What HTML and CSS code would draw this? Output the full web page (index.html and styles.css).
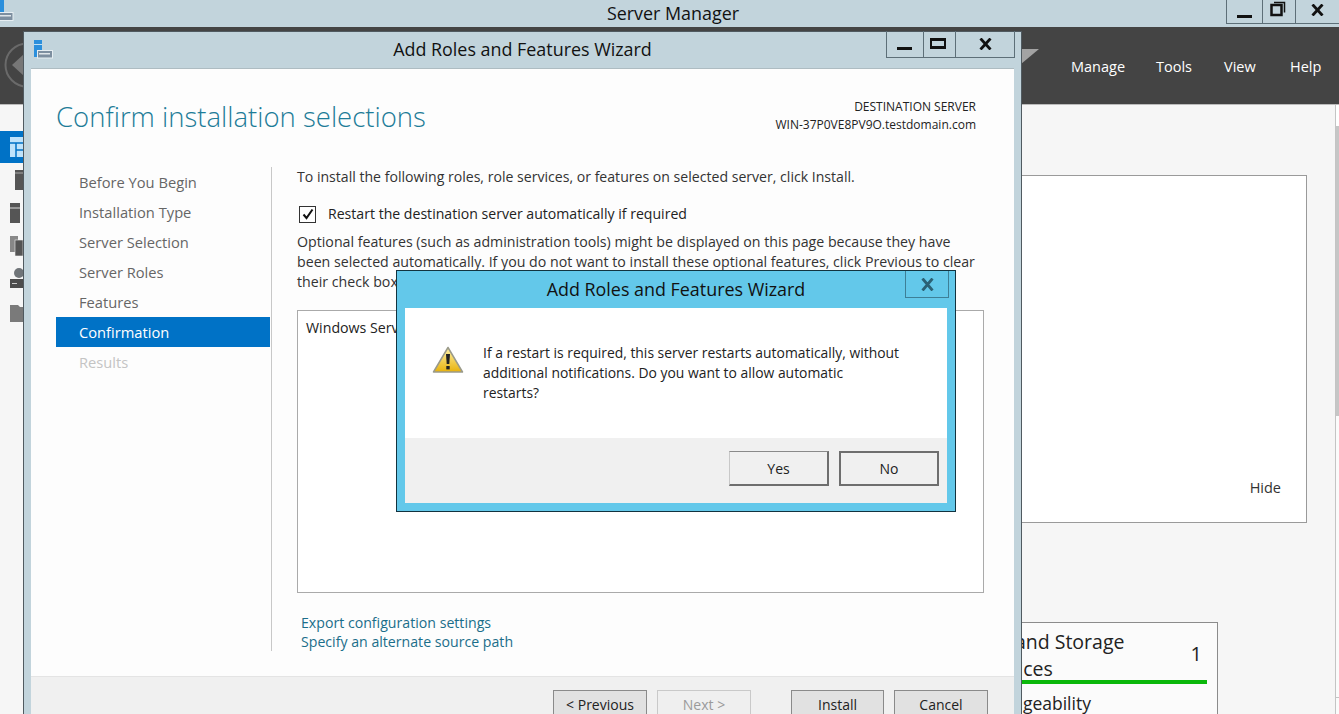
FILE: index.html
```html
<!DOCTYPE html>
<html lang="en">
<head>
<meta charset="utf-8">
<title>Server Manager</title>
<link rel="stylesheet" href="styles.css">
</head>
<body>
<div class="desktop">
  <div class="manager">
    <header class="mtitle">
      <svg class="mlogo" width="14" height="22" viewBox="0 0 14 22"><rect x="-6" y="0" width="10" height="17" fill="#2b8fdc"/><rect x="-2" y="12.500" width="15" height="8" fill="#7d8fa0" stroke="#e6eef2"/><rect x="-1" y="15" width="12" height="1.500" fill="#dfe6ea"/></svg>
      <span class="mname">Server Manager</span>
      <div class="ctrls mctrls">
        <button class="ctrl c1"><span class="ic-min"></span></button>
        <button class="ctrl c2">
          <svg class="ic-restore" width="16" height="16" viewBox="0 0 16 16"><path d="M4 1.500h10.500v10" fill="none" stroke="#111" stroke-width="1.500"/><rect x="1.500" y="4" width="10" height="10" fill="none" stroke="#111" stroke-width="2.500"/></svg>
        </button>
        <button class="ctrl c3"><svg class="ic-x up" width="13" height="12" viewBox="0 0 13 12"><path d="M1.500 .5 11.500 11.500M11.500 .5 1.500 11.500" stroke="#111" stroke-width="2.800"/></svg></button>
      </div>
    </header>
    <div class="mhead">
      <div class="backbtn"><svg width="46" height="46" viewBox="0 0 46 46"><circle cx="23" cy="23" r="21.500" fill="none" stroke="#6a6a6a" stroke-width="2"/><path d="M8 23 20 12v22z" fill="#777"/></svg></div>
      <svg class="flag" width="18" height="16" viewBox="0 0 18 16"><path d="M0 0H18L0 15z" fill="#a3a3a3"/></svg>
      <nav class="menu"><span>Manage</span><span>Tools</span><span>View</span><span>Help</span></nav>
    </div>
    <div class="mbody">
      <aside class="side">
        <div class="sitem active"><svg width="13" height="20" viewBox="0 0 13 20"><rect width="13" height="20" fill="#bfe3fb"/><path d="M0 6h13M6 6v14M6 13h7" stroke="#0072c6" stroke-width="1.500"/></svg></div>
        <div class="sitem i2"><svg width="8" height="20" viewBox="0 0 8 20"><rect width="8" height="20" fill="#555"/><path d="M0 3h8" stroke="#aaa"/></svg></div>
        <div class="sitem i3"><svg width="13" height="20" viewBox="0 0 13 20"><rect width="10" height="20" fill="#555"/><path d="M0 5h10" stroke="#ddd"/></svg></div>
        <div class="sitem i4"><svg width="13" height="20" viewBox="0 0 13 20"><rect width="8" height="16" fill="#888"/><rect x="5" y="4" width="8" height="16" fill="#555" stroke="#eee" stroke-width=".6"/></svg></div>
        <div class="sitem i5"><svg width="13" height="21" viewBox="0 0 13 21"><circle cx="9" cy="5" r="5" fill="#6f7478"/><rect y="11" width="13" height="9" fill="#4c4c4c"/><path d="M2 15.500h5" stroke="#ccc"/></svg></div>
        <div class="sitem i6"><svg width="13" height="20" viewBox="0 0 13 20"><path d="M0 3h8l2 2h3v15H0z" fill="#7a7a7a"/></svg></div>
      </aside>
      <main class="dash">
        <section class="welcome"><span class="hide">Hide</span></section>
        <section class="tile">
          <div class="tile-head">
            <h3>File and Storage<br>Services</h3>
            <span class="count">1</span>
          </div>
          <div class="bar"></div>
          <p class="tile-row">Manageability</p>
        </section>
      </main>
      <div class="scroll"><div class="thumbcap"></div><div class="thumb"></div><div class="tick"></div></div>
    </div>
  </div>

  <div class="wizard">
    <header class="wtitle">
      <svg class="wlogo" width="19" height="19" viewBox="0 0 19 19"><rect x="0" y="0" width="8" height="17" fill="#2b8fdc"/><path d="M0 4.500h8" stroke="#bfe0f5"/><rect x="3.500" y="10.500" width="15" height="7.500" fill="#7d8fa0" stroke="#e6eef2"/><rect x="5" y="13" width="11" height="1.500" fill="#dfe6ea"/></svg>
      <span class="wname">Add Roles and Features Wizard</span>
      <div class="ctrls wctrls">
        <button class="ctrl w1"><span class="ic-min"></span></button>
        <button class="ctrl w2"><span class="ic-max"></span></button>
        <button class="ctrl w3"><svg class="ic-x" width="13" height="12" viewBox="0 0 13 12"><path d="M1.500 .5 11.500 11.500M11.500 .5 1.500 11.500" stroke="#111" stroke-width="2.800"/></svg></button>
      </div>
    </header>
    <div class="wcontent">
      <div class="whead">
        <h1>Confirm installation selections</h1>
        <div class="dest"><div>DESTINATION SERVER</div><div>WIN-37P0VE8PV9O.testdomain.com</div></div>
      </div>
      <div class="wmain">
        <nav class="steps">
          <div class="step">Before You Begin</div>
          <div class="step">Installation Type</div>
          <div class="step">Server Selection</div>
          <div class="step">Server Roles</div>
          <div class="step">Features</div>
          <div class="step current">Confirmation</div>
          <div class="step off">Results</div>
        </nav>
        <div class="pane">
          <p class="intro">To install the following roles, role services, or features on selected server, click Install.</p>
          <label class="check">
            <span class="box"><svg width="12" height="12" viewBox="0 0 12 12"><path d="M1.500 6.500 4.500 10 10.500 1.500" fill="none" stroke="#111" stroke-width="2"/></svg></span>
            <span>Restart the destination server automatically if required</span>
          </label>
          <p class="optional">Optional features (such as administration tools) might be displayed on this page because they have<br>been selected automatically. If you do not want to install these optional features, click Previous to clear<br>their check boxes.</p>
          <div class="listbox">Windows Server Backup</div>
          <div class="links"><a>Export configuration settings</a><a>Specify an alternate source path</a></div>
        </div>
      </div>
      <footer class="wfoot">
        <button class="btn">&lt; Previous</button>
        <button class="btn dis">Next &gt;</button>
        <button class="btn install">Install</button>
        <button class="btn">Cancel</button>
      </footer>
    </div>
  </div>

  <div class="dialog">
    <header class="dtitle">
      <span class="dname">Add Roles and Features Wizard</span>
      <button class="dclose"><svg width="13" height="13" viewBox="0 0 13 13"><path d="M1.500 .5 11.500 12.500M11.500 .5 1.500 12.500" stroke="#2b6175" stroke-width="2.800"/></svg></button>
    </header>
    <div class="dcontent">
      <div class="dmsg">
        <svg class="warn" width="32" height="28" viewBox="0 0 32 28"><defs><linearGradient id="wg" x1="0" y1="0" x2="0" y2="1"><stop offset="0" stop-color="#fff2a8"/><stop offset="1" stop-color="#e8b20c"/></linearGradient></defs><path d="M16 1.500 30.500 26h-29z" fill="url(#wg)" stroke="#9a9a8a" stroke-width="1.500" stroke-linejoin="round"/><path d="M14 8h4l-.7 10h-2.600z" fill="#222"/><rect x="14.300" y="20" width="3.400" height="3.400" fill="#222"/></svg>
        <p>If a restart is required, this server restarts automatically, without<br>additional notifications. Do you want to allow automatic<br>restarts?</p>
      </div>
      <footer class="dfoot">
        <button class="btn dbtn">Yes</button>
        <button class="btn dbtn def">No</button>
      </footer>
    </div>
  </div>
</div>
</body>
</html>
```

FILE: styles.css
```css
* { box-sizing: border-box; }
html, body { margin: 0; height: 100%; overflow: hidden; }
body { font-family: "Open Sans", "Noto Sans", sans-serif; color: #222; background: #f6f6f6; }
h1, h3, p { margin: 0; font-weight: 400; }
button { font-family: inherit; padding: 0; margin: 0; }

.desktop { position: relative; width: 1339px; height: 714px; overflow: hidden; }

/* main window */
.manager { display: flex; flex-direction: column; height: 714px; }
.mtitle { position: relative; height: 27px; flex: none; background: #c2d4dc; display: flex; justify-content: center; align-items: center; }
.mlogo { position: absolute; left: 0; top: 0; }
.mname { font-size: 17.900px; color: #111; margin-left: 7px; margin-bottom: 2px; }
.ctrls { position: absolute; top: 0; right: 0; display: flex; border: 1px solid #5d6f78; border-top: 0; }
.mctrls { height: 24px; width: 113px; border-right: 0; }
.ctrl { background: transparent; border: 0; border-left: 1px solid #5d6f78; display: flex; align-items: center; justify-content: center; height: 100%; }
.ctrl:first-child { border-left: 0; }
.c1 { width: 35px; } .c2 { width: 34px; } .c3 { width: 44px; }
.ic-min { display: block; width: 15px; height: 3px; background: #111; margin-top: 9px; }
.ic-max { display: block; width: 16px; height: 11px; border: 3px solid #111; border-left-width: 2px; border-right-width: 2px; margin-right: 3px; margin-bottom: 1px; }
.ic-restore { margin: -5px 3px 0 0; }
.ic-x { display: block; }
.ic-x.up { margin-top: -4px; }

.mhead { position: relative; height: 78px; flex: none; background: #444; border-bottom: 1px solid #bbb; }
.backbtn { position: absolute; left: 4px; top: 15px; width: 46px; height: 46px; }
.flag { position: absolute; left: 1021px; top: 22px; }
.menu { position: absolute; left: 1071px; top: 30px; display: flex; font-size: 14.500px; color: #fff; line-height: 20px; }
.menu span:nth-child(1) { width: 85px; }
.menu span:nth-child(2) { width: 68px; }
.menu span:nth-child(3) { width: 66px; }

.mbody { flex: 1; display: flex; min-height: 0; }
.side { width: 44px; flex: none; display: flex; flex-direction: column; padding-top: 26px; }
.sitem { height: 33px; flex: none; display: flex; align-items: center; padding-left: 10px; }
.sitem.active { height: 32px; background: #0072c6; }
.sitem.i2 { padding-left: 15px; }
.dash { flex: 1; position: relative; }
.welcome { position: absolute; left: 600px; top: 70px; width: 663px; height: 348px; background: #fff; border: 1px solid #9a9a9a; }
.hide { position: absolute; right: 25px; bottom: 24px; font-size: 14.500px; color: #333; line-height: 20px; }
.tile { position: absolute; left: 800px; top: 517px; width: 374px; height: 120px; background: #fbfbfb; border: 1px solid #8c8c8c; padding: 6px 10px 0 20px; }
.tile-head { display: flex; justify-content: space-between; align-items: center; height: 51px; }
.tile-head h3 { font-size: 19.500px; line-height: 27px; padding-left: 114px; white-space: nowrap; }
.count { font-size: 20px; padding: 0 5px 2px 0; }
.bar { height: 4px; background: #0bb80b; margin-bottom: 7px; }
.tile-row { font-size: 17.500px; line-height: 24px; padding-left: 112px; }
.scroll { width: 4px; flex: none; border-left: 1px solid #c4c4c4; background: #fbfbfb; display: flex; flex-direction: column; }
.thumbcap { height: 21px; background: #fff; flex: none; }
.thumb { height: 290px; background: #c6c6c6; flex: none; }
.tick { height: 1px; background: #c4c4c4; margin-top: 281px; flex: none; }

/* wizard */
.wizard { position: absolute; left: 23px; top: 31px; width: 999px; height: 690px; background: #c2d4dc; border: 1px solid #505a60; border-bottom: 0; display: flex; flex-direction: column; padding: 0 7px 0 7px; }
.wtitle { height: 36px; flex: none; display: flex; justify-content: center; align-items: center; margin: 0 -7px; position: relative; }
.wlogo { position: absolute; left: 10px; top: 8px; }
.wname { font-size: 17.900px; color: #111; margin-bottom: 2px; }
.wctrls { height: 27px; width: 129px; right: 6px; top: -1px; border-top: 0; }
.w1 { width: 36px; } .w2 { width: 33px; } .w3 { width: 59px; }
.wcontent { flex: 1; min-height: 0; background: #fdfdfd; border-top: 1px solid #aebcc2; display: flex; flex-direction: column; }
.whead { height: 98px; flex: none; display: flex; justify-content: space-between; padding: 29px 38px 0 25px; }
.whead h1 { font-size: 27.500px; font-weight: 300; color: #1d7c98; line-height: 38px; }
.dest { font-size: 12px; color: #222; text-align: right; line-height: 18px; }
.wmain { flex: none; height: 509px; display: flex; }
.steps { width: 216px; flex: none; height: 484px; margin-left: 25px; border-right: 1px solid #c8c8c8; display: flex; flex-direction: column; }
.step { height: 30px; line-height: 31px; width: 214px; padding-left: 23px; font-size: 14.700px; color: #666; flex: none; }
.step.current { background: #0072c6; color: #fff; }
.step.off { color: #c4c4c4; }
.pane { flex: 1; padding-left: 25px; padding-right: 30px; }
.intro { font-size: 14.100px; line-height: 20px; color: #333; }
.check { display: flex; align-items: center; gap: 12px; margin: 17px 0 0 2px; font-size: 14.100px; line-height: 20px; color: #222; }
.box { width: 17px; height: 17px; border: 1px solid #333; background: #fff; display: flex; align-items: center; justify-content: center; flex: none; }
.optional { font-size: 14.200px; line-height: 20px; margin-top: 8px; color: #333; white-space: nowrap; }
.listbox { margin-top: 18px; width: 687px; height: 283px; border: 1px solid #aaa; background: #fff; padding: 7px 8px; font-size: 14.200px; line-height: 20px; color: #222; }
.links { margin: 20px 0 0 4px; display: flex; flex-direction: column; font-size: 14.150px; line-height: 19px; color: #1b6e8a; }
.wfoot { flex: 1; background: #f0f0f0; border-top: 1px solid #e4e4e4; display: flex; padding: 13px 0 0 522px; align-items: flex-start; }
.btn { width: 94px; height: 29px; background: #e1e1e1; border: 1px solid #8a8a8a; font-size: 14px; color: #222; margin-right: 10px; }
.btn.dis { background: #efefef; border-color: #c9c9c9; color: #9a9a9a; }
.btn.install { margin-left: 30px; width: 93px; }

/* dialog */
.dialog { position: absolute; left: 396px; top: 270px; width: 560px; height: 242px; background: #63c8ea; border: 1px solid #12333f; padding: 0 8px 8px 8px; display: flex; flex-direction: column; }
.dtitle { height: 37px; flex: none; position: relative; display: flex; justify-content: center; align-items: center; }
.dname { font-size: 17.900px; color: #111; margin-bottom: 2px; }
.dclose { position: absolute; right: -2px; top: 0; width: 44px; height: 27px; background: transparent; border: 1px solid #3d7f97; border-top: 0; display: flex; align-items: center; justify-content: center; }
.dcontent { flex: 1; min-height: 0; background: #fff; display: flex; flex-direction: column; }
.dmsg { height: 130px; flex: none; display: flex; align-items: flex-start; padding: 29px 0 0 27px; gap: 19px; }
.warn { margin-top: 9px; }
.dmsg p { font-size: 13.900px; line-height: 20px; color: #222; white-space: nowrap; padding-top: 6px; }
.dfoot { flex: 1; background: #f0f0f0; display: flex; justify-content: flex-end; padding: 13px 8px 0 0; gap: 10px; }
.dbtn { width: 100px; height: 35px; margin: 0; background: #f0f0f0; border-color: #8a8a8a #6e6e6e #6e6e6e #c8c8c8; border-width: 1px 2px 2px 1px; }
.dbtn.def { border: 2px solid #6e6e6e; }
```
